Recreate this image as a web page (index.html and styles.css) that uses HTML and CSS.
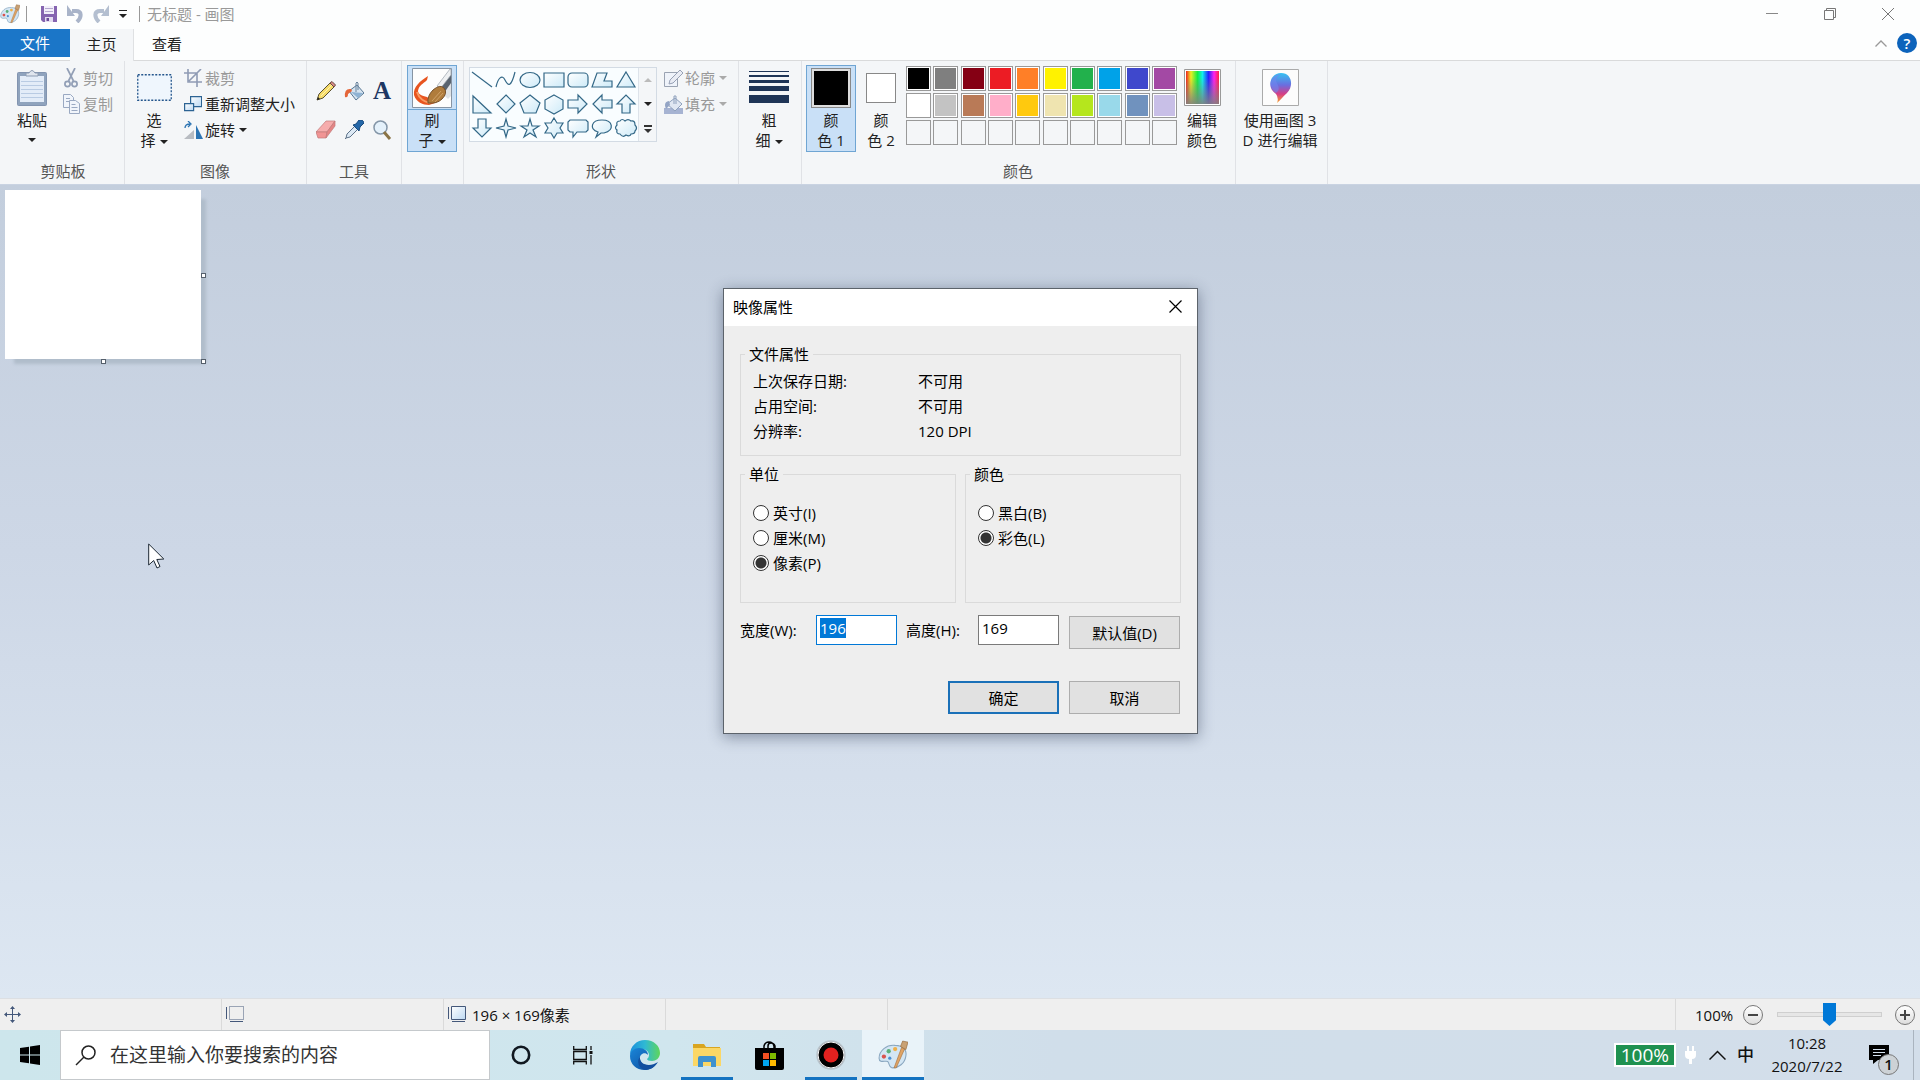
FILE: index.html
```html
<!DOCTYPE html>
<html lang="zh-CN">
<head>
<meta charset="utf-8">
<title>无标题 - 画图</title>
<link rel="stylesheet" href="styles.css">
</head>
<body>
<svg class="defs" aria-hidden="true">
  <defs>
    <linearGradient id="shapeFill" x1="0" y1="0" x2="1" y2="1"><stop offset="0" stop-color="#fff"/><stop offset="1" stop-color="#cdeaf8"/></linearGradient>
    <linearGradient id="paneFill" x1="0" y1="0" x2="1" y2="1"><stop offset="0" stop-color="#fff"/><stop offset="1" stop-color="#bcd8f2"/></linearGradient>
    <linearGradient id="edgeTop" x1="0" y1="0" x2="1" y2="0"><stop offset="0" stop-color="#1b8fdc"/><stop offset=".5" stop-color="#2fb9d4"/><stop offset="1" stop-color="#5fd65a"/></linearGradient>
    <linearGradient id="edgeLow" x1="0" y1="0" x2="1" y2="1"><stop offset="0" stop-color="#1a86d8"/><stop offset="1" stop-color="#0c4a9c"/></linearGradient>
    <linearGradient id="pin" x1="0" y1="0" x2="0" y2="1"><stop offset="0" stop-color="#35c3f2"/><stop offset=".4" stop-color="#6a6ee0"/><stop offset=".7" stop-color="#d63d86"/><stop offset="1" stop-color="#f7a62b"/></linearGradient>
    <linearGradient id="hues" x1="0" y1="0" x2="1" y2="0"><stop offset="0" stop-color="#e22"/><stop offset=".15" stop-color="#ee2"/><stop offset=".35" stop-color="#1e4"/><stop offset=".5" stop-color="#1ee"/><stop offset=".68" stop-color="#22f"/><stop offset=".85" stop-color="#f2e"/><stop offset="1" stop-color="#f24"/></linearGradient>
    <linearGradient id="toGray" x1="0" y1="0" x2="0" y2="1"><stop offset=".2" stop-color="#808080" stop-opacity="0"/><stop offset="1" stop-color="#808080" stop-opacity=".9"/></linearGradient>
    <symbol id="palette" viewBox="0 0 28 28">
      <path d="M1 17C1 10 8 4 16 5c8 0 11 5 10 10-1 7-7 11-12 11-4 0-3-4-5-6-2-1-8 2-8-3z" fill="#d3e6f4" stroke="#8aa7c0"/>
      <circle cx="5.500" cy="15.500" r="2" fill="#d9534f"/><circle cx="10" cy="10.500" r="2" fill="#5bb07a"/><circle cx="16" cy="8.500" r="2" fill="#eeb04a"/><circle cx="11" cy="17" r="1.500" fill="#4e8fd0"/>
      <path d="M15 26L22 7l3 1-8 18z" fill="#e0a465" stroke="#a8713b" stroke-width=".6"/><path d="M21 6l2-5 5 1-2 7z" fill="#c9a173" stroke="#94693c" stroke-width=".6"/>
    </symbol>
  </defs>
</svg>

<header class="titlebar">
  <svg class="app-icon" viewBox="0 0 28 28"><use href="#palette"/></svg>
  <span class="divider"></span>
  <div class="quick">
    <button class="plain" aria-label="保存"><svg width="16" height="16" viewBox="0 0 16 16"><path d="M0 0h16v16H2L0 14z" fill="#8564b0"/><path d="M3 0h10v8H3z" fill="#f2effa"/><path d="M4 2.500h8M4 5.500h8" stroke="#b5a7d0"/><path d="M4 11h8v5H4z" fill="#e3dcf0"/><path d="M5.500 12H8v3H5.500z" fill="#6b4a98"/></svg></button>
    <button class="plain" aria-label="撤消"><svg width="16" height="18" viewBox="0 0 16 18"><path d="M5 6h4c6 0 6 6 1 11" fill="none" stroke="#a9b4c9" stroke-width="4"/><path d="M0 0v11h8z" fill="#a9b4c9"/></svg></button>
    <button class="plain" aria-label="恢复"><svg width="16" height="18" viewBox="0 0 16 18"><path d="M11 6H7c-6 0-6 6-1 11" fill="none" stroke="#b4bfd0" stroke-width="4"/><path d="M16 0v11H8z" fill="#b4bfd0"/></svg></button>
    <button class="plain" aria-label="自定义快速访问工具栏"><svg width="8" height="8" viewBox="0 0 8 8"><path d="M0 .5h8" stroke="#222"/><path d="M0 4h8L4 8z" fill="#222"/></svg></button>
  </div>
  <span class="divider"></span>
  <h1 class="title">无标题 - 画图</h1>
  <div class="window-buttons">
    <button class="plain" aria-label="最小化"><svg width="12" height="12" viewBox="0 0 12 12"><path d="M0 5.500h12" stroke="#888"/></svg></button>
    <button class="plain" aria-label="还原"><svg width="12" height="12" viewBox="0 0 12 12" fill="none" stroke="#777"><path d="M.5 2.500h9v9h-9zM2.500 2V.5h9v9H10"/></svg></button>
    <button class="plain" aria-label="关闭"><svg width="12" height="12" viewBox="0 0 12 12"><path d="M0 0l12 12M12 0L0 12" stroke="#777"/></svg></button>
  </div>
</header>

<nav class="tabs">
  <button class="tab tab-file">文件</button>
  <button class="tab tab-active">主页</button>
  <button class="tab">查看</button>
  <div class="tabs-end">
    <button class="plain" aria-label="最小化功能区"><svg width="12" height="7" viewBox="0 0 12 7"><path d="M.5 6.500L6 1l5.500 5.500" fill="none" stroke="#999" stroke-width="1.300"/></svg></button>
    <button class="help" aria-label="帮助">?</button>
  </div>
</nav>

<section class="ribbon" aria-label="功能区">
  <div class="group g-clipboard">
    <div class="tools">
      <button class="big"><span class="pic"><svg width="30" height="36" viewBox="0 0 30 36"><rect x=".5" y="2.500" width="29" height="33" rx="1" fill="#8fa3bd" stroke="#8294b0"/><path d="M3 6h24v26H3z" fill="#e3ecf8"/><path d="M4 11.500h22M4 15.500h22M4 19.500h22M4 23.500h22M4 27.500h22" stroke="#b9cbe3"/><path d="M9 6V3h3q3-5 6 0h3v3z" fill="#dfe5ee" stroke="#8c9bb2"/></svg></span>粘贴<i class="caret caret-below"></i></button>
      <div class="stack">
        <button class="small" disabled><span class="ico"><svg width="14" height="20" viewBox="0 0 14 20" fill="none" stroke="#929fb6" stroke-width="1.700"><path d="M3 0l6.500 13M11 0L4.500 13"/><circle cx="3.500" cy="16" r="2.600"/><circle cx="10.500" cy="16" r="2.600"/></svg></span>剪切</button>
        <button class="small" disabled><span class="ico"><svg width="17" height="20" viewBox="0 0 17 20" fill="#f1f5fb" stroke="#9aa9c2"><path d="M.5.500h7l3 3v10H.5z"/><path d="M6.500 6.500h6l4 3v10h-10z"/><path d="M3 4.500h4M3 7.500h3M8.500 10.500h4M8.500 13.500h6M8.500 16.500h6"/></svg></span>复制</button>
      </div>
    </div>
    <h2>剪贴板</h2>
  </div>

  <div class="group g-image">
    <div class="tools">
      <button class="big"><span class="pic"><svg width="35" height="27" viewBox="0 0 35 27"><rect x=".75" y=".75" width="33.500" height="25.500" fill="#eff6fd" stroke="#24568c" stroke-width="1.300" stroke-dasharray="2 1.500"/></svg></span>选<br><span>择<i class="caret"></i></span></button>
      <div class="stack">
        <button class="small" disabled><span class="ico"><svg width="18" height="18" viewBox="0 0 18 18" fill="none" stroke="#8f9bb4" stroke-width="1.600"><path d="M4 0v13h14M0 4h13v14M5 12L17 0"/></svg></span>裁剪</button>
        <button class="small"><span class="ico"><svg width="18" height="16" viewBox="0 0 18 16" fill="url(#paneFill)" stroke="#2c6393" stroke-width="1.200"><path d="M6.600.6h11v10h-11z"/><path d="M.6 7.600h9v7h-9z"/></svg></span>重新调整大小</button>
        <button class="small"><span class="ico"><svg width="19" height="19" viewBox="0 0 19 19"><path d="M10 18V9L0 18z" fill="#b8bcc2"/><path d="M12 18V4l7 14z" fill="#2c74b3"/><path d="M1 7q0-4 5-4M4 0l3 3-3 3" fill="none" stroke="#2c74b3" stroke-width="1.300"/></svg></span>旋转<i class="caret"></i></button>
      </div>
    </div>
    <h2>图像</h2>
  </div>

  <div class="group g-tools">
    <div class="tool-grid">
      <button class="plain" aria-label="铅笔"><svg width="20" height="20" viewBox="0 0 20 20"><path d="M1 19l2-6L14 2l4 4L7 17z" fill="#f6dc6b" stroke="#5a5030"/><path d="M14 2l2-1.500 3.500 3.500L18 6z" fill="#d98a86" stroke="#6a4a40"/><path d="M1 19l1-3 2 2z" fill="#222"/><path d="M5 15L16 4" stroke="#fff3ae"/></svg></button>
      <button class="plain" aria-label="用颜色填充"><svg width="20" height="20" viewBox="0 0 20 20"><path d="M5 10L13 4l7 8-8 7z" fill="#d6e4f0" stroke="#557592"/><path d="M7 11l7 6 5-5z" fill="#8fb3d3"/><path d="M12 11V2q1-2 2 0v7" fill="none" stroke="#68829c"/><path d="M7 8Q0 7 1 16q3 1 3-3l4-3z" fill="#e4663a"/></svg></button>
      <button class="plain letter" aria-label="文本">A</button>
      <button class="plain" aria-label="橡皮擦"><svg width="20" height="19" viewBox="0 0 20 19"><path d="M0 12L10 1h9l-8 11z" fill="#f6acac" stroke="#c07a7a" stroke-width=".7"/><path d="M0 12h11l-1 6H2z" fill="#f19494" stroke="#c07a7a" stroke-width=".7"/><path d="M11 12l8-11v5l-9 12z" fill="#e58585" stroke="#c07a7a" stroke-width=".7"/></svg></button>
      <button class="plain" aria-label="颜色选取器"><svg width="20" height="20" viewBox="0 0 20 20"><path d="M2 18L1 19M2 18l1-4 8-8 3 3-8 8z" fill="#dce9f5" stroke="#5d7289"/><path d="M9 5l3-1 3-4q4-1 5 3l-4 4-1 4z" fill="#2467a8" stroke="#194a7d"/></svg></button>
      <button class="plain" aria-label="放大镜"><svg width="19" height="20" viewBox="0 0 19 20"><circle cx="7.500" cy="7.500" r="6.500" fill="#e4f1fb" stroke="#8496a8" stroke-width="1.500"/><path d="M11 12l6 7" stroke="#8a7446" stroke-width="3"/></svg></button>
    </div>
    <h2>工具</h2>
  </div>

  <div class="group g-brush">
    <button class="big selected split"><span class="pic"><svg width="40" height="40" viewBox="0 0 40 40"><path d="M.5.500h39v39H.5z" fill="#fdfdfd" stroke="#8794a3"/><path d="M39 14L30 25l6 6 3-3z" fill="#dfe2e5"/><path d="M39 3L27 19l5 6 7-10z" fill="#59636f"/><path d="M38 1L25 18l3 3L39 7V1z" fill="#eef0f2" stroke="#9aa2ab" stroke-width=".7"/><path d="M16 8C8 13 1 19 2 27c2 7 9 10 15 10l6-2-8-6c-5-1-9-3-9-6 1-6 5-7 9-11z" fill="#e8541f"/><path d="M5 24q3 9 13 11" stroke="#f79a63" fill="none" stroke-width="2"/><path d="M16 35q-1-7 5-13 7-6 11-2 4 5-2 11-5 5-14 4z" fill="#b07c3c" stroke="#76502a"/><path d="M20 33l9-10M23 34l8-9" stroke="#cfa268"/></svg></span>刷<br><span>子<i class="caret"></i></span></button>
  </div>

  <div class="group g-shapes">
    <div class="tools">
      <div class="gallery">
        <div class="shapes">
          <svg viewBox="0 0 24 24"><path d="M2 4l20 15"/></svg>
          <svg viewBox="0 0 24 24"><path d="M2 19C4 10 8 6 11 12s6 8 10-8" fill="none"/></svg>
          <svg viewBox="0 0 24 24"><ellipse cx="12" cy="12" rx="10" ry="7.500"/></svg>
          <svg viewBox="0 0 24 24"><path d="M2 5h20v14H2z"/></svg>
          <svg viewBox="0 0 24 24"><rect x="2" y="5" width="20" height="14" rx="4"/></svg>
          <svg viewBox="0 0 24 24"><path d="M2 19L7 5h10l-3 8h8v6z"/></svg>
          <svg viewBox="0 0 24 24"><path d="M12 4l9 15H3z"/></svg>
          <svg viewBox="0 0 24 24"><path d="M3 4v17h18z"/></svg>
          <svg viewBox="0 0 24 24"><path d="M12 3l9 9-9 9-9-9z"/></svg>
          <svg viewBox="0 0 24 24"><path d="M12 3l10 8-4 10H6L2 11z"/></svg>
          <svg viewBox="0 0 24 24"><path d="M12 3l9 5v9l-9 5-9-5V8z"/></svg>
          <svg viewBox="0 0 24 24"><path d="M2 8h10V3l9 9-9 9v-5H2z"/></svg>
          <svg viewBox="0 0 24 24"><path d="M22 8H12V3l-9 9 9 9v-5h10z"/></svg>
          <svg viewBox="0 0 24 24"><path d="M8 21V12H3l9-9 9 9h-5v9z"/></svg>
          <svg viewBox="0 0 24 24"><path d="M8 3v9H3l9 9 9-9h-5V3z"/></svg>
          <svg viewBox="0 0 24 24"><path d="M12 3l2 7 8 2-8 2-2 7-2-7-8-2 8-2z"/></svg>
          <svg viewBox="0 0 24 24"><path d="M12 3l2 7h7l-6 4 3 7-6-4-6 4 3-7-6-4h7z"/></svg>
          <svg viewBox="0 0 24 24"><path d="M12 2l3 5h6l-3 5 3 5h-6l-3 5-3-5H3l3-5-3-5h6z"/></svg>
          <svg viewBox="0 0 24 24"><path d="M4 4h16l2 2v8l-2 2h-9l-4 5v-5H4l-2-2V6z"/></svg>
          <svg viewBox="0 0 24 24"><path d="M8 16C-1 13 1 4 12 4s13 10 2 13l-3 0-5 4z"/></svg>
          <svg viewBox="0 0 24 24"><path d="M6 5q2-3 5 0 3-3 6 0 4-1 4 4 3 3 0 6 0 3-4 3-1 3-5 1-3 3-6-1-4 0-3-4-3-2 0-5-1-4 3-4z"/></svg>
        </div>
        <div class="gallery-scroll">
          <button class="plain" aria-label="上一行"><i class="up"></i></button>
          <button class="plain" aria-label="下一行"><i class="caret"></i></button>
          <button class="plain" aria-label="更多"><svg width="8" height="8" viewBox="0 0 8 8"><path d="M0 1h8" stroke="#333" stroke-width="2"/><path d="M0 4h8L4 8z" fill="#333"/></svg></button>
        </div>
      </div>
      <div class="stack">
        <button class="small" disabled><span class="ico"><svg width="19" height="17" viewBox="0 0 19 17"><path d="M14 2.500H.5v14h13V9" fill="#eff3fa" stroke="#9aa3b2"/><path d="M5 14l1-4L16 0l3 3L9 13z" fill="#e9ecf4" stroke="#97a1b5"/></svg></span>轮廓<i class="caret"></i></button>
        <button class="small" disabled><span class="ico"><svg width="19" height="19" viewBox="0 0 19 19"><path d="M0 13h19v6H0z" fill="#a6b3d2"/><path d="M3 9l8-6 7 6-7 7z" fill="#e0e7f2" stroke="#8ea0bc"/><path d="M10 9V1h2v8" fill="none" stroke="#8ea0bc"/><path d="M5 6Q-1 7 2 14l4-4z" fill="#94a5c5"/></svg></span>填充<i class="caret"></i></button>
      </div>
    </div>
    <h2>形状</h2>
  </div>

  <div class="group g-size">
    <button class="big"><span class="pic"><svg width="40" height="33" viewBox="0 0 40 33" fill="#1f3557"><path d="M0 0h40v1H0zM0 4h40v2H0zM0 9h40v3H0zM0 15h40v5H0zM0 24h40v8H0z"/></svg></span>粗<br><span>细<i class="caret"></i></span></button>
  </div>

  <div class="group g-colors">
    <div class="tools">
      <button class="big selected"><span class="pic"><i class="well well-one"></i></span>颜<br>色 1</button>
      <button class="big"><span class="pic"><i class="well well-two"></i></span>颜<br>色 2</button>
      <div class="swatches">
        <button class="sw c-black" aria-label="黑色"></button><button class="sw c-gray" aria-label="灰色-50%"></button><button class="sw c-darkred" aria-label="深红色"></button><button class="sw c-red" aria-label="红色"></button><button class="sw c-orange" aria-label="橙色"></button><button class="sw c-yellow" aria-label="黄色"></button><button class="sw c-green" aria-label="绿色"></button><button class="sw c-turquoise" aria-label="青绿"></button><button class="sw c-indigo" aria-label="靛蓝"></button><button class="sw c-purple" aria-label="紫色"></button>
        <button class="sw c-white" aria-label="白色"></button><button class="sw c-silver" aria-label="灰色-25%"></button><button class="sw c-brown" aria-label="褐色"></button><button class="sw c-rose" aria-label="玫瑰色"></button><button class="sw c-gold" aria-label="金色"></button><button class="sw c-cream" aria-label="浅黄色"></button><button class="sw c-lime" aria-label="酸橙色"></button><button class="sw c-sky" aria-label="淡青绿色"></button><button class="sw c-steel" aria-label="蓝灰色"></button><button class="sw c-lavender" aria-label="淡紫色"></button>
        <button class="sw" aria-label="自定义 1"></button><button class="sw" aria-label="自定义 2"></button><button class="sw" aria-label="自定义 3"></button><button class="sw" aria-label="自定义 4"></button><button class="sw" aria-label="自定义 5"></button><button class="sw" aria-label="自定义 6"></button><button class="sw" aria-label="自定义 7"></button><button class="sw" aria-label="自定义 8"></button><button class="sw" aria-label="自定义 9"></button><button class="sw" aria-label="自定义 10"></button>
      </div>
      <button class="big edit-colors"><span class="pic"><svg width="37" height="37" viewBox="0 0 37 37"><path d="M.5.500h36v36H.5z" fill="#fff" stroke="#999"/><path d="M2 2h33v33H2z" fill="url(#hues)"/><path d="M2 2h33v33H2z" fill="url(#toGray)"/></svg></span>编辑<br>颜色</button>
    </div>
    <h2>颜色</h2>
  </div>

  <div class="group g-3d">
    <button class="big"><span class="pic"><svg width="37" height="37" viewBox="0 0 37 37"><path d="M.5.500h36v36H.5z" fill="#fcfcfc" stroke="#aaa"/><path d="M15 34q2-5-1-9C4 19 8 4 19 4c11 0 13 13 6 20-4 3-6 7-10 10z" fill="url(#pin)"/><path d="M9 13q3-8 10-8-7 4-4 9 4 7-1 10-6-4-5-11z" fill="#6f87ee" opacity=".6"/></svg></span>使用画图 3<br>D 进行编辑</button>
  </div>
</section>

<main class="workspace">
  <div class="canvas">
    <i class="handle handle-e"></i><i class="handle handle-s"></i><i class="handle handle-se"></i>
  </div>
  <svg class="cursor" width="17" height="26" viewBox="0 0 17 26"><path d="M.7 1v21l5-4.500 3.300 7.500 3-1.500-3.200-7 7-.5z" fill="#fff" stroke="#1c2733"/></svg>
</main>

<form class="dialog" role="dialog" aria-labelledby="dialog-title">
  <div class="dialog-head">
    <h2 id="dialog-title">映像属性</h2>
    <button type="button" class="plain" aria-label="关闭"><svg width="13" height="13" viewBox="0 0 13 13"><path d="M.5.500l12 12M12.500.5l-12 12" stroke="#000" stroke-width="1.200"/></svg></button>
  </div>
  <div class="dialog-body">
    <fieldset class="box box-file">
      <legend>文件属性</legend>
      <dl>
        <dt>上次保存日期:</dt><dd>不可用</dd>
        <dt>占用空间:</dt><dd>不可用</dd>
        <dt>分辨率:</dt><dd>120 DPI</dd>
      </dl>
    </fieldset>
    <div class="pair">
      <fieldset class="box box-radio">
        <legend>单位</legend>
        <label><input type="radio" name="unit">英寸(I)</label>
        <label><input type="radio" name="unit">厘米(M)</label>
        <label><input type="radio" name="unit" checked>像素(P)</label>
      </fieldset>
      <fieldset class="box box-radio">
        <legend>颜色</legend>
        <label><input type="radio" name="color">黑白(B)</label>
        <label><input type="radio" name="color" checked>彩色(L)</label>
      </fieldset>
    </div>
    <div class="fields">
      <label for="w">宽度(W):</label><input id="w" type="text" value="196">
      <label for="h">高度(H):</label><input id="h" type="text" value="169">
      <button type="button" class="push">默认值(D)</button>
    </div>
    <div class="actions">
      <button type="button" class="push push-default">确定</button>
      <button type="button" class="push">取消</button>
    </div>
  </div>
</form>

<footer class="status">
  <div class="cell"><svg width="17" height="17" viewBox="0 0 17 17"><path d="M8.500 1v15M1 8.500h15" stroke="#44587a"/><path d="M8.500 0L11 3H6zM8.500 17l2.500-3H6zM0 8.500L3 6v5zM17 8.500L14 6v5z" fill="#44587a"/></svg></div>
  <div class="cell"><svg width="19" height="17" viewBox="0 0 19 17" fill="none" stroke="#44587a"><path d="M3.500.5h14v13h-14z" stroke-dasharray="1 1"/><path d="M.5 1v12M4 15.500h13"/></svg></div>
  <div class="cell"><svg width="19" height="17" viewBox="0 0 19 17" stroke="#44587a"><path d="M3.500.5h14v13h-14z" fill="url(#paneFill)"/><path d="M.5 1v12M4 15.500h13"/></svg>196 × 169像素</div>
  <div class="cell"></div>
  <div class="cell cell-rest"></div>
  <div class="zoom">
    <label for="zoom">100%</label>
    <button class="round" aria-label="缩小"><svg width="10" height="10" viewBox="0 0 10 10"><path d="M0 5h10" stroke="#444" stroke-width="2"/></svg></button>
    <input id="zoom" type="range" min="0" max="100" value="50">
    <button class="round" aria-label="放大"><svg width="10" height="10" viewBox="0 0 10 10"><path d="M0 5h10M5 0v10" stroke="#444" stroke-width="2"/></svg></button>
  </div>
</footer>

<div class="taskbar">
  <button class="plain start" aria-label="开始"><svg width="20" height="20" viewBox="0 0 20 20"><path d="M0 3l9-1.300V9.500H0zM10 1.500L20 0v9.500H10zM0 10.500h9v7.800L0 17zM10 10.500h10V20l-10-1.500z"/></svg></button>
  <label class="search"><svg width="21" height="21" viewBox="0 0 21 21" fill="none" stroke="#222" stroke-width="1.500"><circle cx="13.500" cy="7.500" r="6.500"/><path d="M9 12L1 20"/></svg><input type="text" placeholder="在这里输入你要搜索的内容" aria-label="搜索"></label>
  <div class="apps">
    <button class="app" aria-label="Cortana"><svg width="20" height="20" viewBox="0 0 20 20"><circle cx="10" cy="10" r="8.200" fill="none" stroke="#101820" stroke-width="2.600"/></svg></button>
    <button class="app" aria-label="任务视图"><svg width="20" height="20" viewBox="0 0 20 20" fill="none" stroke="#111" stroke-width="1.300"><path d="M.7 1v3.500h12.600V1M.7 6.500h12.600v8H.7zM.7 19.500v-3h12.600v3M18 1v4M18 10v9.500"/><path d="M16.500 7.500h3" stroke-width="3"/></svg></button>
    <button class="app" aria-label="Edge"><svg width="30" height="30" viewBox="0 0 30 30"><path d="M0 15C0 6 7 0 15 0c9 0 15 6 15 13 0 5-4 8-8 8-3 0-5-1-5-2 1-1 2-2 2-4 0-4-4-6-8-6C6 9 1 12 0 15z" fill="url(#edgeTop)"/><path d="M0 16c0-5 5-8 9-8 5 0 9 3 9 7h0c-3-4-9-1-8 4 1 7 9 10 17 4-3 5-8 7-12 7C6 30 0 24 0 16z" fill="url(#edgeLow)"/><path d="M10 17c-1 7 9 11 18 5-3 5-8 8-13 8-6-1-9-9-5-13z" fill="#124f9f"/></svg></button>
    <button class="app running" aria-label="文件资源管理器"><svg width="28" height="24" viewBox="0 0 28 24"><path d="M0 1h11l2 3h14v6H0z" fill="#d9a520"/><path d="M0 5h28v18H0z" fill="#fbd766"/><path d="M5 24V15q0-2 2-2h14q2 0 2 2v9h-5v-5h-8v5z" fill="#3f92cf"/></svg></button>
    <button class="app" aria-label="Microsoft Store"><svg width="29" height="29" viewBox="0 0 29 29"><path d="M9 8V5q1-4 5-4t5 4v3M13 8V5q0-3 3-3t4 3v3" fill="none" stroke="#000" stroke-width="1.500"/><path d="M0 7h29v20q0 2-2 2H2q-2 0-2-2z"/><path d="M8 12h6v6H8z" fill="#f25022"/><path d="M15 12h6v6h-6z" fill="#7fba00"/><path d="M8 19h6v6H8z" fill="#00a4ef"/><path d="M15 19h6v6h-6z" fill="#ffb900"/></svg></button>
    <button class="app running" aria-label="录屏"><svg width="30" height="30" viewBox="0 0 30 30"><circle cx="15" cy="15" r="14" fill="#000" stroke="#b9c4cc" stroke-width="1.500"/><circle cx="15" cy="15" r="13" fill="none" stroke="#fff"/><circle cx="15" cy="15" r="7.500" fill="#e3211f"/></svg></button>
    <button class="app running active" aria-label="画图"><svg width="30" height="30" viewBox="0 0 28 28"><use href="#palette"/></svg></button>
  </div>
  <div class="tray">
    <span class="battery">100%</span>
    <svg class="plug" width="11" height="18" viewBox="0 0 11 18" fill="#fff"><path d="M2 0h2v5h3V0h2v5h2v4q0 4-4 4v5H4v-5q-4 0-4-4V5h2z"/></svg>
    <button class="plain" aria-label="显示隐藏的图标"><svg width="17" height="10" viewBox="0 0 17 10"><path d="M.5 9.500l8-8 8 8" fill="none" stroke="#111" stroke-width="1.500"/></svg></button>
    <button class="plain ime">中</button>
    <div class="clock"><time>10:28</time><time>2020/7/22</time></div>
    <button class="plain notify" aria-label="通知"><svg width="20" height="20" viewBox="0 0 20 20"><path d="M0 0h20v15H9l-5 4v-4H0z"/><path d="M4 4.500h12M4 7.500h12M4 10.500h8" stroke="#d3dfec"/></svg><span class="badge">1</span></button>
    <button class="plain desktop" aria-label="显示桌面"></button>
  </div>
</div>
<script src="main.js"></script>
</body>
</html>
```
FILE: styles.css
```css
* { box-sizing: border-box; }

body {
  margin: 0;
  min-height: 100vh;
  display: flex;
  flex-direction: column;
  position: relative;
  font: 15px/20px "Open Sans", "Noto Sans CJK SC", sans-serif;
  color: #222;
  background: #fdfefe;
}

button, input { font: inherit; color: inherit; }
button { background: none; border: 0; padding: 0; }
h1, h2, dl, dd { margin: 0; font-size: 15px; font-weight: 400; }
svg { display: block; flex: none; }
i { font-style: normal; }
.defs { position: absolute; width: 0; height: 0; }
.plain { display: flex; align-items: center; justify-content: center; }

.caret, .up {
  display: inline-block;
  border: 4px solid transparent;
  border-bottom-width: 0;
  border-top-color: #222;
  margin-left: 4px;
  vertical-align: middle;
}
.up { border-width: 0 4px 4px; border-bottom-color: #bbb; margin: 0; }

/* title bar */
.titlebar { display: flex; align-items: center; height: 29px; padding-bottom: 2px; }
.app-icon { width: 20px; height: 20px; }
.divider { width: 1px; height: 16px; background: #999; margin: 0 7px 0 6px; }
.quick { display: flex; align-items: center; gap: 10px; padding: 0 6px 0 7px; }
.titlebar .title { color: #999; }
.window-buttons { display: flex; margin-left: auto; padding-right: 3px; }
.window-buttons .plain { width: 58px; height: 24px; }

/* tabs */
.tabs { display: flex; height: 32px; border-bottom: 1px solid #d9dadb; }
.tab { width: 66px; height: 30px; }
.tab-file { width: 70px; height: 28px; background: #1b76c8; color: #fff; }
.tab-active { width: 64px; height: 32px; padding-bottom: 2px; background: #f4f6f8; border-right: 1px solid #dfe1e3; }
.tabs-end { display: flex; align-items: center; gap: 10px; margin-left: auto; padding: 0 3px 3px 0; }
.help { width: 20px; height: 20px; border-radius: 50%; background: #0c63bb; color: #fff; font-weight: 600; }

/* ribbon */
.ribbon { display: flex; height: 124px; background: #f4f6f8; border-bottom: 1px solid #c9d3e2; }
.group { display: flex; flex-direction: column; justify-content: space-between; padding: 4px 5px 0; border-right: 1px solid #e0e2e6; }
.group h2 { text-align: center; line-height: 26px; color: #555; }
.tools { display: flex; }
.stack { display: flex; flex-direction: column; }
.big { display: flex; flex-direction: column; justify-content: flex-start; align-items: center; width: 50px; height: 87px; text-align: center; white-space: nowrap; }
.big > span:last-child { height: 20px; }
.pic { display: flex; flex: none; height: 45px; align-items: center; justify-content: center; }
.selected { background: #c9e0f7; box-shadow: inset 0 0 0 1px #6fa5d3; }
.split .pic { width: 50px; border: 1px solid #6fa5d3; }
.big .caret-below { margin: 8px 0 0; }
.small { display: flex; align-items: center; height: 26px; white-space: nowrap; }
.small:disabled { color: #999; }
.small:disabled .caret { border-top-color: #aaa; }
.ico { display: flex; justify-content: center; width: 20px; margin-right: 2px; }

.g-clipboard { width: 125px; padding-left: 7px; }
.g-clipboard .stack { margin-left: 4px; }
.g-image { width: 182px; padding-left: 4px; }
.g-image .stack { margin-left: 4px; }
.g-tools { width: 95px; }
.g-brush { width: 62px; }
.g-shapes { width: 275px; }
.g-size { width: 63px; }
.g-colors { width: 434px; padding-left: 4px; }
.g-3d { width: 92px; padding-left: 4px; }
.g-3d .big { width: 80px; }

.tool-grid { display: grid; grid-template-columns: repeat(3, 28px); grid-template-rows: 39px 39px; padding-top: 6px; }
.letter { font: 700 25px/26px "Liberation Serif", serif; color: #1d3763; }

.gallery { display: flex; height: 75px; margin-top: 2px; border: 1px solid #d3dbe4; background: #f9fdff; }
.shapes { display: grid; grid-template-columns: repeat(7, 24px); grid-auto-rows: 24px; }
.shapes svg { width: 24px; height: 24px; fill: url(#shapeFill); stroke: #336887; stroke-width: 1.2; }
.gallery-scroll { display: grid; grid-template-rows: repeat(3, 1fr); width: 18px; background: #f4f6f8; border-left: 1px solid #dde3ea; }
.gallery-scroll .caret { margin: 0; }
.g-shapes .stack { margin-left: 6px; }

.well { display: block; border: 1px solid #888; }
.well-one { width: 40px; height: 40px; background: #000; box-shadow: inset 0 0 0 2px #ddd; }
.well-two { width: 30px; height: 30px; background: #fff; }
.swatches { display: grid; grid-template-columns: repeat(10, 25px); grid-auto-rows: 25px; row-gap: 2px; justify-content: space-between; align-content: start; width: 271px; margin-top: 1px; }
.sw { border: 1px solid #999; background: #f4f6f8; }
.sw[class*="c-"] { box-shadow: inset 0 0 0 1px #fff; }
.c-black { background: #000; }
.c-gray { background: #7f7f7f; }
.c-darkred { background: #850014; }
.c-red { background: #ec1c24; }
.c-orange { background: #ff7f27; }
.c-yellow { background: #fff200; }
.c-green { background: #22b14c; }
.c-turquoise { background: #00a2e8; }
.c-indigo { background: #3f48cc; }
.c-purple { background: #a349a4; }
.c-white { background: #fff; }
.c-silver { background: #c3c3c3; }
.c-brown { background: #b97a57; }
.c-rose { background: #ffaec9; }
.c-gold { background: #ffc90e; }
.c-cream { background: #efe4b0; }
.c-lime { background: #b5e61d; }
.c-sky { background: #99d9ea; }
.c-steel { background: #7092be; }
.c-lavender { background: #c8bfe7; }

/* drawing area */
.workspace { flex: 1; position: relative; padding: 5px; background: linear-gradient(#c3cedd, #cdd7e6 45%, #dde7f2); }
.canvas { position: relative; width: 196px; height: 169px; background: #fff; box-shadow: 7px 7px 3px -2px #b0bdcb; }
.handle { position: absolute; width: 5px; height: 5px; background: #fff; border: 1px solid #555f6b; }
.handle-e { left: 100%; top: 83px; }
.handle-s { top: 100%; left: 96px; }
.handle-se { left: 100%; top: 100%; }
.cursor { position: absolute; left: 148px; top: 358px; }

/* image properties dialog */
.dialog { position: absolute; left: calc(50% - 237px); top: 288px; width: 475px; background: #eee; border: 1px solid #5c636b; box-shadow: 0 3px 14px rgba(30, 45, 70, .45); color: #000; }
.dialog-head { display: flex; align-items: center; justify-content: space-between; height: 37px; padding: 0 15px 2px 9px; background: #fff; }
.dialog-body { padding: 18px 16px 19px; }
.box { margin: 0; min-width: 0; border: 1px solid #dadada; }
.box legend { margin-left: -8px; padding: 0 4px; line-height: 20px; }
.box-file { height: 112px; padding: 5px 12px; }
.box dl { display: grid; grid-template-columns: 165px 1fr; line-height: 25px; }
.pair { display: flex; gap: 9px; margin-top: 8px; }
.box-radio { flex: 1; height: 139px; padding: 16px 12px 0; }
.box-radio label { display: flex; align-items: center; gap: 4px; height: 25px; }
.box-radio input { appearance: none; width: 16px; height: 16px; margin: 0; border: 1px solid #333; border-radius: 50%; background: #fff; }
.box-radio input:checked { background: radial-gradient(circle, #333 5px, #fff 6px); }
.fields { display: flex; align-items: flex-start; margin-top: 12px; padding-right: 1px; }
.fields label { width: 76px; line-height: 30px; }
.fields label + input + label { width: 72px; margin-left: 9px; }
.fields input { width: 81px; height: 30px; padding: 0 3px 4px; border: 1px solid #7a7a7a; background: #fff; }
.fields input:focus { outline: 0; border-color: #0078d7; }
.fields input::selection { background: #0078d7; color: #fff; }
.push { width: 111px; height: 33px; background: #e1e1e1; border: 1px solid #adadad; }
.push-default { border: 2px solid #1a70b8; }
.fields .push { margin: 1px 0 0 auto; }
.actions { display: flex; justify-content: flex-end; gap: 10px; margin-top: 32px; padding-right: 1px; }

/* status bar */
.status { display: flex; height: 32px; background: #efefef; border-top: 1px solid #dcdfe3; color: #111; }
.cell { display: flex; align-items: center; gap: 5px; width: 222px; padding-left: 4px; border-right: 1px solid #dadada; white-space: nowrap; }
.cell-rest { width: auto; flex: 1; }
.zoom { display: flex; align-items: center; width: 244px; padding-left: 19px; }
.zoom label { width: 48px; }
.round { display: flex; align-items: center; justify-content: center; width: 20px; height: 20px; border: 1px solid #777; border-radius: 50%; background: linear-gradient(#fff, #ddd); }
.zoom input { appearance: none; width: 105px; height: 24px; margin: 0 13px 0 14px; background: none; }
.zoom input::-webkit-slider-runnable-track { height: 5px; background: #e6e6e6; border: 1px solid #cfcfcf; }
.zoom input::-webkit-slider-thumb { appearance: none; width: 13px; height: 23px; margin-top: -10px; background: #0078d7; clip-path: polygon(0 0, 100% 0, 100% 75%, 50% 100%, 0 75%); }

/* taskbar */
.taskbar { display: flex; height: 50px; background: linear-gradient(90deg, #cde6ec, #d0e6ee 35%, #d0deea 55%, #d3deea); color: #111; }
.start { width: 60px; }
.search { display: flex; align-items: center; gap: 14px; width: 430px; padding-left: 14px; background: #fff; border: 1px solid #c5c9cc; }
.search input { flex: 1; min-width: 0; border: 0; padding: 0; background: none; font-size: 19px; line-height: 24px; }
.search input::placeholder { color: #333; }
.apps { display: flex; }
.app { position: relative; display: flex; align-items: center; justify-content: center; width: 62px; }
.running::after { content: ""; position: absolute; bottom: 0; left: 5px; right: 5px; height: 3px; background: #1473c1; }
.active { background: #e9f3f9; }
.active::after { left: 0; right: 0; }
.tray { display: flex; align-items: center; margin-left: auto; }
.battery { padding: 0 5px; border: 2px solid #fff; background: #1f9150; color: #fff; font-size: 19px; line-height: 20px; }
.plug { margin: 0 13px 0 9px; }
.ime { margin: 0 15px 0 11px; font-size: 17px; font-weight: 500; }
.clock { display: flex; flex-direction: column; align-items: center; width: 76px; line-height: 23px; }
.notify { position: relative; margin: 0 24px; }
.badge { position: absolute; left: 9px; top: 9px; width: 21px; height: 21px; border: 1px solid #777; border-radius: 50%; background: #cdd2d6; font-weight: 600; line-height: 19px; }
.desktop { width: 7px; align-self: stretch; border-left: 1px solid #aab4bf; }
```
FILE: main.js
```js
const width = document.getElementById("w");
width.focus();
width.select();
```
